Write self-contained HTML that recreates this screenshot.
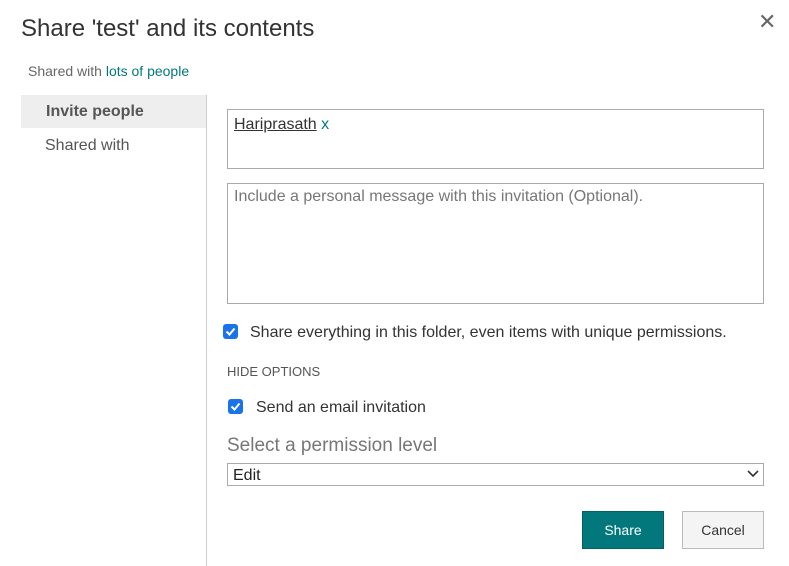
<!DOCTYPE html>
<html><head><style>
body{margin:0;width:789px;height:566px;background:#fff;font-family:"Liberation Sans",sans-serif;position:relative;overflow:hidden;color:#333}
.a{position:absolute;white-space:nowrap}
.cb{position:absolute;width:15px;height:15px;background:#1a73e8;border-radius:3px}
.cb svg{position:absolute;left:0;top:0}
</style></head><body>
<div class="a" style="left:21px;top:15px;font-size:24px;color:#333">Share 'test' and its contents</div>
<div class="a" style="left:758px;top:9px;font-size:22px;color:#666">✕</div>
<div class="a" style="left:28px;top:63px;font-size:14px;color:#666">Shared with <span style="color:#03787c">lots of people</span></div>
<div class="a" style="left:21px;top:95px;width:185px;height:33px;background:#eee"></div>
<div class="a" style="left:46px;top:103px;font-size:16px;font-weight:bold;color:#555">Invite people</div>
<div class="a" style="left:45px;top:137px;font-size:16px;color:#555">Shared with</div>
<div class="a" style="left:206px;top:95px;width:1px;height:471px;background:#ccc"></div>
<div class="a" style="left:227px;top:109px;width:535px;height:58px;border:1px solid #aaa"></div>
<div class="a" style="left:234px;top:116px;font-size:16px;color:#333"><span style="text-decoration:underline">Hariprasath</span> <span style="color:#03787c">x</span></div>
<div class="a" style="left:227px;top:183px;width:535px;height:119px;border:1px solid #aaa"></div>
<div class="a" style="left:234px;top:188px;font-size:16px;color:#777">Include a personal message with this invitation (Optional).</div>
<div class="cb" style="left:223px;top:324px"><svg width="15" height="15"><path d="M3.5 7.5l3 3 5-6" stroke="#fff" stroke-width="2" fill="none"/></svg></div>
<div class="a" style="left:250px;top:324px;font-size:16px;color:#333">Share everything in this folder, even items with unique permissions.</div>
<div class="a" style="left:227px;top:364px;font-size:13px;color:#555">HIDE OPTIONS</div>
<div class="cb" style="left:228px;top:399px"><svg width="15" height="15"><path d="M3.5 7.5l3 3 5-6" stroke="#fff" stroke-width="2" fill="none"/></svg></div>
<div class="a" style="left:256px;top:399px;font-size:16px;color:#333">Send an email invitation</div>
<div class="a" style="left:227px;top:435px;font-size:19px;color:#777">Select a permission level</div>
<div class="a" style="left:227px;top:463px;width:535px;height:21px;border:1px solid #aaa"></div>
<div class="a" style="left:233px;top:467px;font-size:16px;color:#222">Edit</div>
<svg class="a" style="left:747px;top:469px" width="12" height="10"><path d="M1 2l5 5 5-5" stroke="#333" stroke-width="1.6" fill="none"/></svg>
<div class="a" style="left:582px;top:511px;width:80px;height:36px;background:#03787c;border:1px solid #02605f;color:#fff;font-size:14px;text-align:center;line-height:36px">Share</div>
<div class="a" style="left:682px;top:511px;width:80px;height:36px;background:#f4f4f4;border:1px solid #bbb;color:#333;font-size:14px;text-align:center;line-height:36px">Cancel</div>
</body></html>
